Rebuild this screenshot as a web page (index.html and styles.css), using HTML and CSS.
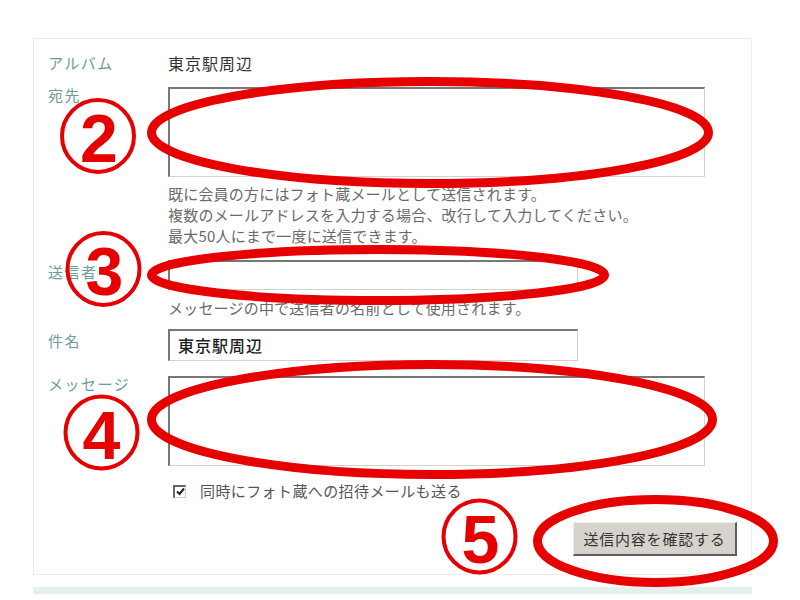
FILE: index.html
```html
<!DOCTYPE html>
<html lang="ja">
<head>
<meta charset="utf-8">
<title>写真を送る</title>
<link rel="stylesheet" href="styles.css">
</head>
<body>
<div class="page">
  <div class="panel">
    <div class="row row-album">
      <div class="label">アルバム</div>
      <div class="value">東京駅周辺</div>
    </div>
    <div class="row row-to">
      <div class="label label-top">宛先</div>
      <div class="field">
        <div class="textarea"></div>
        <p class="help">既に会員の方にはフォト蔵メールとして送信されます。<br>複数のメールアドレスを入力する場合、改行して入力してください。<br>最大50人にまで一度に送信できます。</p>
      </div>
    </div>
    <div class="row row-sender">
      <div class="label label-input">送信者</div>
      <div class="field">
        <div class="input"></div>
        <p class="help">メッセージの中で送信者の名前として使用されます。</p>
      </div>
    </div>
    <div class="row row-subject">
      <div class="label label-input">件名</div>
      <div class="field">
        <div class="input input-subject">東京駅周辺</div>
      </div>
    </div>
    <div class="row row-message">
      <div class="label label-top">メッセージ</div>
      <div class="field">
        <div class="textarea"></div>
        <div class="check-row">
          <span class="checkbox"><svg viewBox="0 0 13 13" width="13" height="13"><path d="M3 6.5 L5.5 9 L10 3.5" fill="none" stroke="#222" stroke-width="2"/></svg></span>
          <span class="check-label">同時にフォト蔵への招待メールも送る</span>
        </div>
      </div>
    </div>
    <div class="actions">
      <span class="button">送信内容を確認する</span>
    </div>
  </div>
  <div class="bottom-bar"></div>

  <svg class="marks" width="800" height="600" viewBox="0 0 800 600">
    <g fill="none" stroke="#e60000">
      <ellipse cx="430" cy="132.5" rx="278.5" ry="51" stroke-width="9"/>
      <ellipse cx="378" cy="275" rx="226.5" ry="25.5" stroke-width="9"/>
      <ellipse cx="432" cy="419.5" rx="280.5" ry="55" stroke-width="9"/>
      <ellipse cx="655.5" cy="541" rx="118" ry="41.5" stroke-width="9"/>
      <circle cx="98" cy="136" r="36" stroke-width="4"/>
      <circle cx="103.5" cy="269" r="36" stroke-width="4"/>
      <circle cx="101.5" cy="432.5" r="36" stroke-width="4"/>
      <circle cx="479.5" cy="536.5" r="36" stroke-width="4"/>
    </g>
    <g class="num" fill="#e60000" text-anchor="middle">
      <text x="99" y="162">2</text>
      <text x="104.5" y="295">3</text>
      <text x="101.5" y="458.5">4</text>
      <text x="480.5" y="562.5">5</text>
    </g>
  </svg>
</div>
</body>
</html>
```

FILE: styles.css
```css
html, body {
  margin: 0;
  padding: 0;
  background: #ffffff;
}

body {
  font-family: "Noto Sans CJK JP", "Liberation Sans", sans-serif;
  color: #333333;
}

.page {
  position: relative;
  width: 800px;
  height: 600px;
  padding: 38px 0 0 33px;
  box-sizing: border-box;
}

.panel {
  width: 719px;
  height: 537px;
  box-sizing: border-box;
  border: 1px solid #ececec;
  padding: 14px 14px 0 14px;
  display: flex;
  flex-direction: column;
}

.row {
  display: grid;
  grid-template-columns: 120px 1fr;
  align-items: start;
}

.label {
  font-size: 15px;
  line-height: 20px;
  letter-spacing: 1.5px;
  color: #6b9d9a;
  white-space: nowrap;
}

.label-top {
  margin-top: -2px;
}

.label-input {
  margin-top: 2px;
}

.value {
  font-size: 16px;
  line-height: 20px;
  letter-spacing: 1px;
  color: #333333;
}

.row-to {
  margin-top: 14px;
}

.row-sender {
  margin-top: 14px;
}

.row-subject {
  margin-top: 11px;
}

.row-message {
  margin-top: 15px;
}

.field {
  display: flex;
  flex-direction: column;
}

.textarea {
  width: 537px;
  height: 90px;
  box-sizing: border-box;
  border-style: solid;
  border-width: 2px 1px 1px 2px;
  border-color: #777777 #d2d2d2 #d2d2d2 #777777;
  background: #ffffff;
}

.input {
  width: 410px;
  height: 30px;
  box-sizing: border-box;
  border-style: solid;
  border-width: 2px 1px 1px 2px;
  border-color: #777777 #d2d2d2 #d2d2d2 #777777;
  background: #ffffff;
}

.input-subject {
  height: 32px;
  padding-left: 8px;
  font-size: 16px;
  line-height: 29px;
  letter-spacing: 1px;
  font-weight: 500;
  color: #1e1e1e;
}

.help {
  margin: 6px 0 0 0;
  font-size: 15px;
  line-height: 21px;
  letter-spacing: 0.2px;
  color: #6a6a6a;
  white-space: nowrap;
}

.row-sender .help {
  margin-top: 7px;
}

.check-row {
  display: flex;
  align-items: center;
  margin-top: 15px;
  height: 20px;
}

.checkbox {
  width: 13px;
  height: 13px;
  box-sizing: border-box;
  margin-left: 5px;
  border-style: solid;
  border-width: 2px 1px 1px 2px;
  border-color: #666666 #cccccc #cccccc #666666;
  display: flex;
  align-items: center;
  justify-content: center;
  overflow: hidden;
}

.checkbox svg {
  flex: none;
}

.check-label {
  margin-left: 14px;
  font-size: 15px;
  line-height: 20px;
  letter-spacing: 0.4px;
  color: #555555;
  white-space: nowrap;
}

.actions {
  display: flex;
  justify-content: flex-end;
  margin-top: 21px;
}

.button {
  width: 164px;
  height: 34px;
  box-sizing: border-box;
  background: #d6d3cd;
  border-style: solid;
  border-width: 1px 2px 2px 1px;
  border-color: #eeeeee #5e5e5e #5e5e5e #eeeeee;
  font-size: 15px;
  letter-spacing: 0.8px;
  color: #333333;
  display: flex;
  align-items: center;
  justify-content: center;
}

.bottom-bar {
  width: 719px;
  height: 7px;
  margin-top: 12px;
  background: #e3f0ec;
}

.marks {
  position: absolute;
  top: 0;
  left: 0;
  pointer-events: none;
}

.num text {
  font-family: "Liberation Sans", "DejaVu Sans", sans-serif;
  font-weight: bold;
  font-size: 68px;
}
```
